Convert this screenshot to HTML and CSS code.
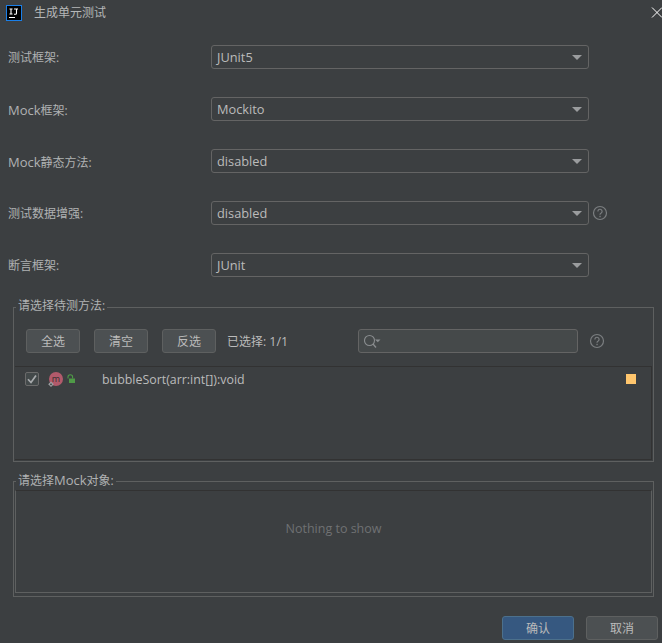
FILE: index.html
```html
<!DOCTYPE html>
<html lang="zh">
<head>
<meta charset="utf-8">
<title>生成单元测试</title>
<link rel="stylesheet" href="styles.css">
</head>
<body>
<div class="dialog">
  <header class="titlebar">
    <svg class="logo" width="16" height="16" viewBox="0 0 16 16">
      <rect x="0.5" y="0.5" width="15" height="15" fill="#000" stroke="#1a7fe8"/>
      <path d="M3.5 4h3M5 4v5M3.5 9h3M8 4h4M10.5 4v4.2q0 1-1 1H8" fill="none" stroke="#fff" stroke-width="1.1"/>
      <rect x="3" y="12" width="6" height="1" fill="#fff"/>
    </svg>
    <span class="title">生成单元测试</span>
    <svg class="close" width="11" height="11" viewBox="0 0 11 11"><path d="M1 0.5L11 10.5M11 0.5L1 10.5" stroke="#fff" stroke-width="1" fill="none"/></svg>
  </header>

  <section class="form">
    <div class="row"><label class="label">测试框架:</label><div class="combo"><span>JUnit5</span><i class="arrow"></i></div></div>
    <div class="row"><label class="label"><span class="en">Mock</span>框架:</label><div class="combo"><span>Mockito</span><i class="arrow"></i></div></div>
    <div class="row"><label class="label"><span class="en">Mock</span>静态方法:</label><div class="combo"><span>disabled</span><i class="arrow"></i></div></div>
    <div class="row"><label class="label">测试数据增强:</label><div class="combo"><span>disabled</span><i class="arrow"></i></div>
      <svg class="help" width="16" height="16" viewBox="0 0 16 16"><circle cx="8" cy="8" r="6.5" fill="none" stroke="#7b7e80" stroke-width="1.2"/><path d="M5.9 6.4a2.1 2.1 0 1 1 3.3 1.7c-.8.5-1.2.9-1.2 1.7" fill="none" stroke="#7b7e80" stroke-width="1.2"/><rect x="7.4" y="10.8" width="1.3" height="1.4" fill="#7b7e80"/></svg>
    </div>
    <div class="row"><label class="label">断言框架:</label><div class="combo"><span>JUnit</span><i class="arrow"></i></div></div>
  </section>

  <section class="group methods">
    <span class="legend">请选择待测方法:</span>
    <div class="toolbar">
      <button class="btn">全选</button>
      <button class="btn">清空</button>
      <button class="btn">反选</button>
      <span class="count">已选择: <span class="en">1/1</span></span>
      <div class="search">
        <svg width="20" height="14" viewBox="0 0 20 14"><circle cx="5.5" cy="6.5" r="5" fill="none" stroke="#8a8d8f" stroke-width="1.1"/><path d="M9 10L12 13.5" stroke="#8a8d8f" stroke-width="1.3"/><path d="M11 5.5h5.5l-2.7 2.8z" fill="#8a8d8f"/></svg>
      </div>
      <svg class="help" width="16" height="16" viewBox="0 0 16 16"><circle cx="8" cy="8" r="6.5" fill="none" stroke="#7b7e80" stroke-width="1.2"/><path d="M5.9 6.4a2.1 2.1 0 1 1 3.3 1.7c-.8.5-1.2.9-1.2 1.7" fill="none" stroke="#7b7e80" stroke-width="1.2"/><rect x="7.4" y="10.8" width="1.3" height="1.4" fill="#7b7e80"/></svg>
    </div>
    <div class="list">
      <div class="item">
        <span class="check"><svg width="14" height="14" viewBox="0 0 14 14"><path d="M3 7.2L6 10.5L11 3.5" fill="none" stroke="#a8abad" stroke-width="1.7"/></svg></span>
        <svg class="method-icon" width="30" height="18" viewBox="0 0 30 18">
          <circle cx="8" cy="8" r="7" fill="#b25a6b"/>
          <text x="8" y="10.8" class="m-letter" text-anchor="middle">m</text>
          <path d="M3 10.5l2.8 2.8L3 16.1L.2 13.3z" fill="#9da0a2"/>
          <path d="M3 12.2l1.1 1.1L3 14.4L1.9 13.3z" fill="#3c3f41"/>
          <rect x="21" y="7.5" width="6" height="4.5" fill="#4f9a47"/>
          <path d="M20 7.5V6a2.3 2.3 0 0 1 4.6 0V7.5" fill="none" stroke="#4f9a47" stroke-width="1.1"/>
        </svg>
        <span class="sig">bubbleSort(arr:int[]):void</span>
        <i class="marker"></i>
      </div>
    </div>
  </section>

  <section class="group mocks">
    <span class="legend">请选择<span class="en">Mock</span>对象:</span>
    <div class="empty">Nothing to show</div>
  </section>

  <footer class="actions">
    <button class="btn wide primary">确认</button>
    <button class="btn wide">取消</button>
  </footer>
</div>
</body>
</html>
```

FILE: styles.css
```css
* { box-sizing: border-box; }
html, body { margin: 0; padding: 0; }
body {
  width: 662px;
  height: 643px;
  overflow: hidden;
  background: #3c3f41;
  color: #bbbbbb;
  font: 12px/16px "Open Sans", "Noto Sans CJK SC", sans-serif;
}
.dialog { display: flex; flex-direction: column; height: 643px; }
.en { font-size: 13px; }

.titlebar { display: flex; align-items: center; height: 26px; padding-left: 6px; }
.logo { flex: none; }
.title { margin-left: 12px; color: #b5b7b8; }
.close { margin-left: auto; margin-bottom: 2px; flex: none; }

.form { display: flex; flex-direction: column; gap: 28px; padding: 19px 0 0 8px; }
.row { display: flex; align-items: center; height: 24px; }
.label { width: 203px; flex: none; padding-top: 2px; color: #b0b2b3; }
.combo {
  display: flex; align-items: center; justify-content: space-between;
  width: 378px; height: 24px; padding: 0 6px 0 5px;
  border: 1px solid #646464; border-radius: 3px;
  font-size: 12.8px;
}
.arrow { width: 0; height: 0; border-style: solid; border-width: 5px 5px 0; border-color: #9a9c9e transparent transparent; }
.row .help { margin-left: 3px; }

.group { position: relative; margin: 0 8px 0 13px; border: 1px solid #5e6060; }
.legend { position: absolute; left: 2px; top: -10px; padding: 0 2px; background: #3c3f41; color: #b0b2b3; }
.methods { margin-top: 30px; height: 155px; }
.mocks { margin-top: 19px; height: 116px; padding: 8px 1px 2px; }

.toolbar { display: flex; align-items: center; height: 24px; margin-top: 21px; padding-left: 12px; }
.btn {
  width: 54px; height: 24px; padding: 2px 0 0; margin-right: 14px;
  background: #4c5052; color: #bbbbbb;
  border: 1px solid #5e6060; border-radius: 3px;
  font: inherit;
}
.count { margin-left: -3px; width: 131px; padding-top: 2px; }
.count .en { font-size: 12.5px; }
.search {
  display: flex; align-items: center; flex: none; width: 220px; height: 24px; padding-left: 5px;
  background: #45494a; border: 1px solid #646464; border-radius: 3px;
}
.toolbar .help { margin-left: 11px; }

.list { margin: 13px 1px 0; height: 94px; border-top: 1px solid #323232; border-right: 1px solid #323232; border-bottom: 1px solid #323232; }
.item { display: flex; align-items: center; height: 24px; padding-left: 10px; }
.check { display: flex; width: 14px; height: 14px; background: #43494a; border: 1px solid #6b6b6b; border-radius: 2px; }
.check svg { flex: none; margin: -1px; }
.method-icon { margin-left: 9px; flex: none; margin-top: 2px; }
.m-letter { font: 9px "Open Sans", sans-serif; fill: #33302f; }
.sig { margin-left: 24px; padding-top: 2px; font-size: 12.4px; }
.marker { width: 10px; height: 10px; background: #ffc66d; margin-left: auto; margin-right: 15px; margin-bottom: 1px; }

.empty {
  display: flex; align-items: center; justify-content: center;
  height: 103px; border: 1px solid #323232; border-bottom-color: #5e6060; border-right-color: #5e6060; border-left-color: #5e6060;
  color: #6f7173;
  font-size: 12.5px;
  padding-bottom: 25px;
}

.actions { display: flex; justify-content: flex-end; gap: 12px; margin-top: 19px; padding-right: 4px; }
.actions .btn { width: 72px; margin: 0; }
.actions .primary { background: #365880; border-color: #4c708c; }
```
